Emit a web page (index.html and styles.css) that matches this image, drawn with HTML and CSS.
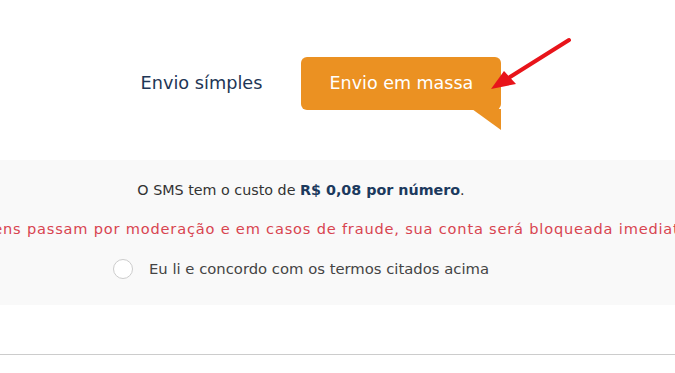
FILE: index.html
```html
<!DOCTYPE html>
<html lang="pt-BR">
<head>
  <meta charset="UTF-8" />
  <meta name="viewport" content="width=device-width, initial-scale=1.0"/>
  <title>Envio de SMS</title>
  <link rel="stylesheet" href="styles.css">
</head>
<body>
  <div class="page">
    <div class="tabs">
      <a href="#" class="tab">Envio símples</a>
      <a href="#" class="tab active">Envio em massa</a>
    </div>

    <div class="terms">
      <p class="price">O SMS tem o custo de <strong>R$ 0,08 por número</strong>.</p>
      <p class="warning">Todas as mensagens passam por moderação e em casos de fraude, sua conta será bloqueada imediatamente.</p>
      <label class="agree">
        <span class="radio"></span>
        <span>Eu li e concordo com os termos citados acima</span>
      </label>
    </div>

    <hr class="divider">
  </div>

  <svg class="arrow" width="90" height="60" viewBox="0 0 90 60">
    <line x1="83" y1="3" x2="24" y2="40" stroke="#e8141a" stroke-width="4" stroke-linecap="round"/>
    <polygon points="5,52 18,34 30,47" fill="#e8141a"/>
  </svg>
</body>
</html>
```

FILE: styles.css
```css
html, body {
  margin: 0;
  overflow: hidden;
}

body {
  font-family: "DejaVu Sans", sans-serif;
  background-color: #fff;
  color: #333;
  width: 675px;
  height: 373px;
  position: relative;
}

.page {
  width: 800px;
  margin-left: -99px;
}

.tabs {
  display: flex;
  justify-content: center;
  align-items: flex-start;
  gap: 39px;
  padding-top: 57px;
  padding-left: 40px;
  height: 160px;
  box-sizing: border-box;
}

.tab {
  color: #1e3656;
  text-decoration: none;
  font-size: 17.7px;
  line-height: 53px;
}

.tab.active {
  position: relative;
  background-color: #eb9122;
  color: #fff;
  width: 200px;
  height: 53px;
  border-radius: 6px;
  text-align: center;
  font-size: 17.5px;
}

.tab.active::after {
  content: "";
  position: absolute;
  right: 0;
  top: 52px;
  border-top: 21px solid #eb9122;
  border-left: 29px solid transparent;
}

.terms {
  background-color: #f9f9f9;
  padding: 19px 0 26px;
  text-align: center;
  white-space: nowrap;
}

.terms p {
  margin: 0;
  font-size: 14.3px;
  line-height: 22px;
}

.price strong {
  color: #1c3a5e;
}

.terms .warning {
  color: #d84450;
  margin: 17px -300px 0;
  font-size: 14.6px;
  letter-spacing: 0.8px;
}

.agree {
  display: flex;
  justify-content: center;
  align-items: center;
  gap: 16px;
  margin-top: 19px;
  font-size: 14.8px;
  line-height: 20px;
  color: #444;
}

.radio {
  width: 18px;
  height: 18px;
  border: 1px solid #ccc;
  border-radius: 50%;
  background-color: #fff;
}

.divider {
  border: 0;
  border-top: 1px solid #ccc;
  margin: 49px 0 0;
}

.arrow {
  position: absolute;
  left: 486px;
  top: 37px;
}
```
